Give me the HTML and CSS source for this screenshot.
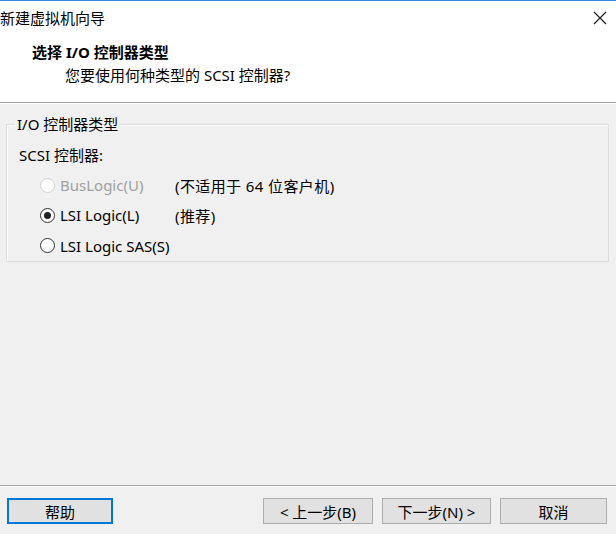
FILE: index.html
```html
<!DOCTYPE html>
<html lang="zh-CN">
<head>
  <meta charset="UTF-8">
  <title>新建虚拟机向导</title>
  <link rel="stylesheet" href="styles.css">
</head>
<body>

<div class="top">
  <div class="titlebar">
    <span class="title">新建虚拟机向导</span>
    <span class="close">
      <svg width="14" height="14" viewBox="0 0 14 14"><path d="M1 1 L13 13 M13 1 L1 13" stroke="#222" stroke-width="1.2" fill="none"/></svg>
    </span>
  </div>
  <div class="header">
    <div class="h-title">选择 I/O 控制器类型</div>
    <div class="h-sub">您要使用何种类型的 SCSI 控制器?</div>
  </div>
</div>

<div class="content">
  <fieldset class="group">
    <legend>I/O 控制器类型</legend>
    <div class="label">SCSI 控制器:</div>
    <div class="row disabled">
      <span class="radio"></span>
      <span class="name">BusLogic(U)</span>
      <span class="note">(不适用于 64 位客户机)</span>
    </div>
    <div class="row">
      <span class="radio checked"></span>
      <span class="name">LSI Logic(L)</span>
      <span class="note">(推荐)</span>
    </div>
    <div class="row">
      <span class="radio"></span>
      <span class="name">LSI Logic SAS(S)</span>
    </div>
  </fieldset>
</div>

<div class="footer">
  <button class="btn help">帮助</button>
  <div class="spacer"></div>
  <button class="btn back">&lt; 上一步(B)</button>
  <button class="btn next">下一步(N) &gt;</button>
  <button class="btn cancel">取消</button>
</div>

</body>
</html>
```

FILE: styles.css
```css
html, body { margin: 0; height: 100%; }
body { font-family: "Noto Sans", "Noto Sans CJK SC", sans-serif; font-size: 15px; color: #000; background: #f0f0f0; display: flex; flex-direction: column; width: 616px; height: 534px; overflow: hidden; }

.top { background: #fff; border-top: 1px solid #3d87d6; border-bottom: 1px solid #a0a0a0; box-shadow: 0 1px 0 #fff; }
.titlebar { height: 31px; display: flex; align-items: center; justify-content: space-between; padding: 0 9px 0 0; }
.title { line-height: 20px; padding-top: 2px; }
.close { display: flex; padding-top: 2px; }

.header { height: 70px; padding-left: 32px; }
.h-title { font-weight: bold; line-height: 20px; padding-top: 10px; }
.h-sub { padding-left: 33px; line-height: 20px; padding-top: 3px; }

.content { flex: 1; padding: 12px 7px 0 6px; }
.group { margin: 0; box-sizing: border-box; height: 147px; border: 1px solid #dcdcdc; padding: 0 12px; box-shadow: inset 1px 1px 0 #fff; }
.group legend { padding: 0 2px; margin-left: -4px; line-height: 18px; }
.label { line-height: 20px; margin-top: 12px; margin-bottom: 5px; }

.row { display: flex; align-items: center; height: 30px; padding-left: 21px; }
.row:last-child { height: 31px; }
.radio { width: 15px; height: 15px; border: 1px solid #333; border-radius: 50%; background: #fff; margin-right: 5px; position: relative; box-sizing: border-box; }
.radio.checked::after { content: ""; position: absolute; left: 3px; top: 3px; width: 7px; height: 7px; border-radius: 50%; background: #222; }
.name { width: 115px; }
.note { letter-spacing: 0.4px; }
.disabled .radio { border-color: #d0d0d0; }
.disabled .name { color: #a0a0a0; }

.footer { border-top: 1px solid #a0a0a0; box-shadow: inset 0 1px 0 #fff; height: 49px; display: flex; align-items: flex-start; padding: 12px 9px 0 7px; box-sizing: border-box; gap: 9px; }
.spacer { flex: 1; }
.btn { height: 26px; background: #e1e1e1; border: 1px solid #adadad; font-family: "Noto Sans", "Noto Sans CJK SC", sans-serif; font-size: 15px; padding: 0; color: #000; }
.help { width: 106px; border: 2px solid #0078d7; }
.back { width: 110px; }
.next { width: 109px; }
.cancel { width: 107px; }
```
